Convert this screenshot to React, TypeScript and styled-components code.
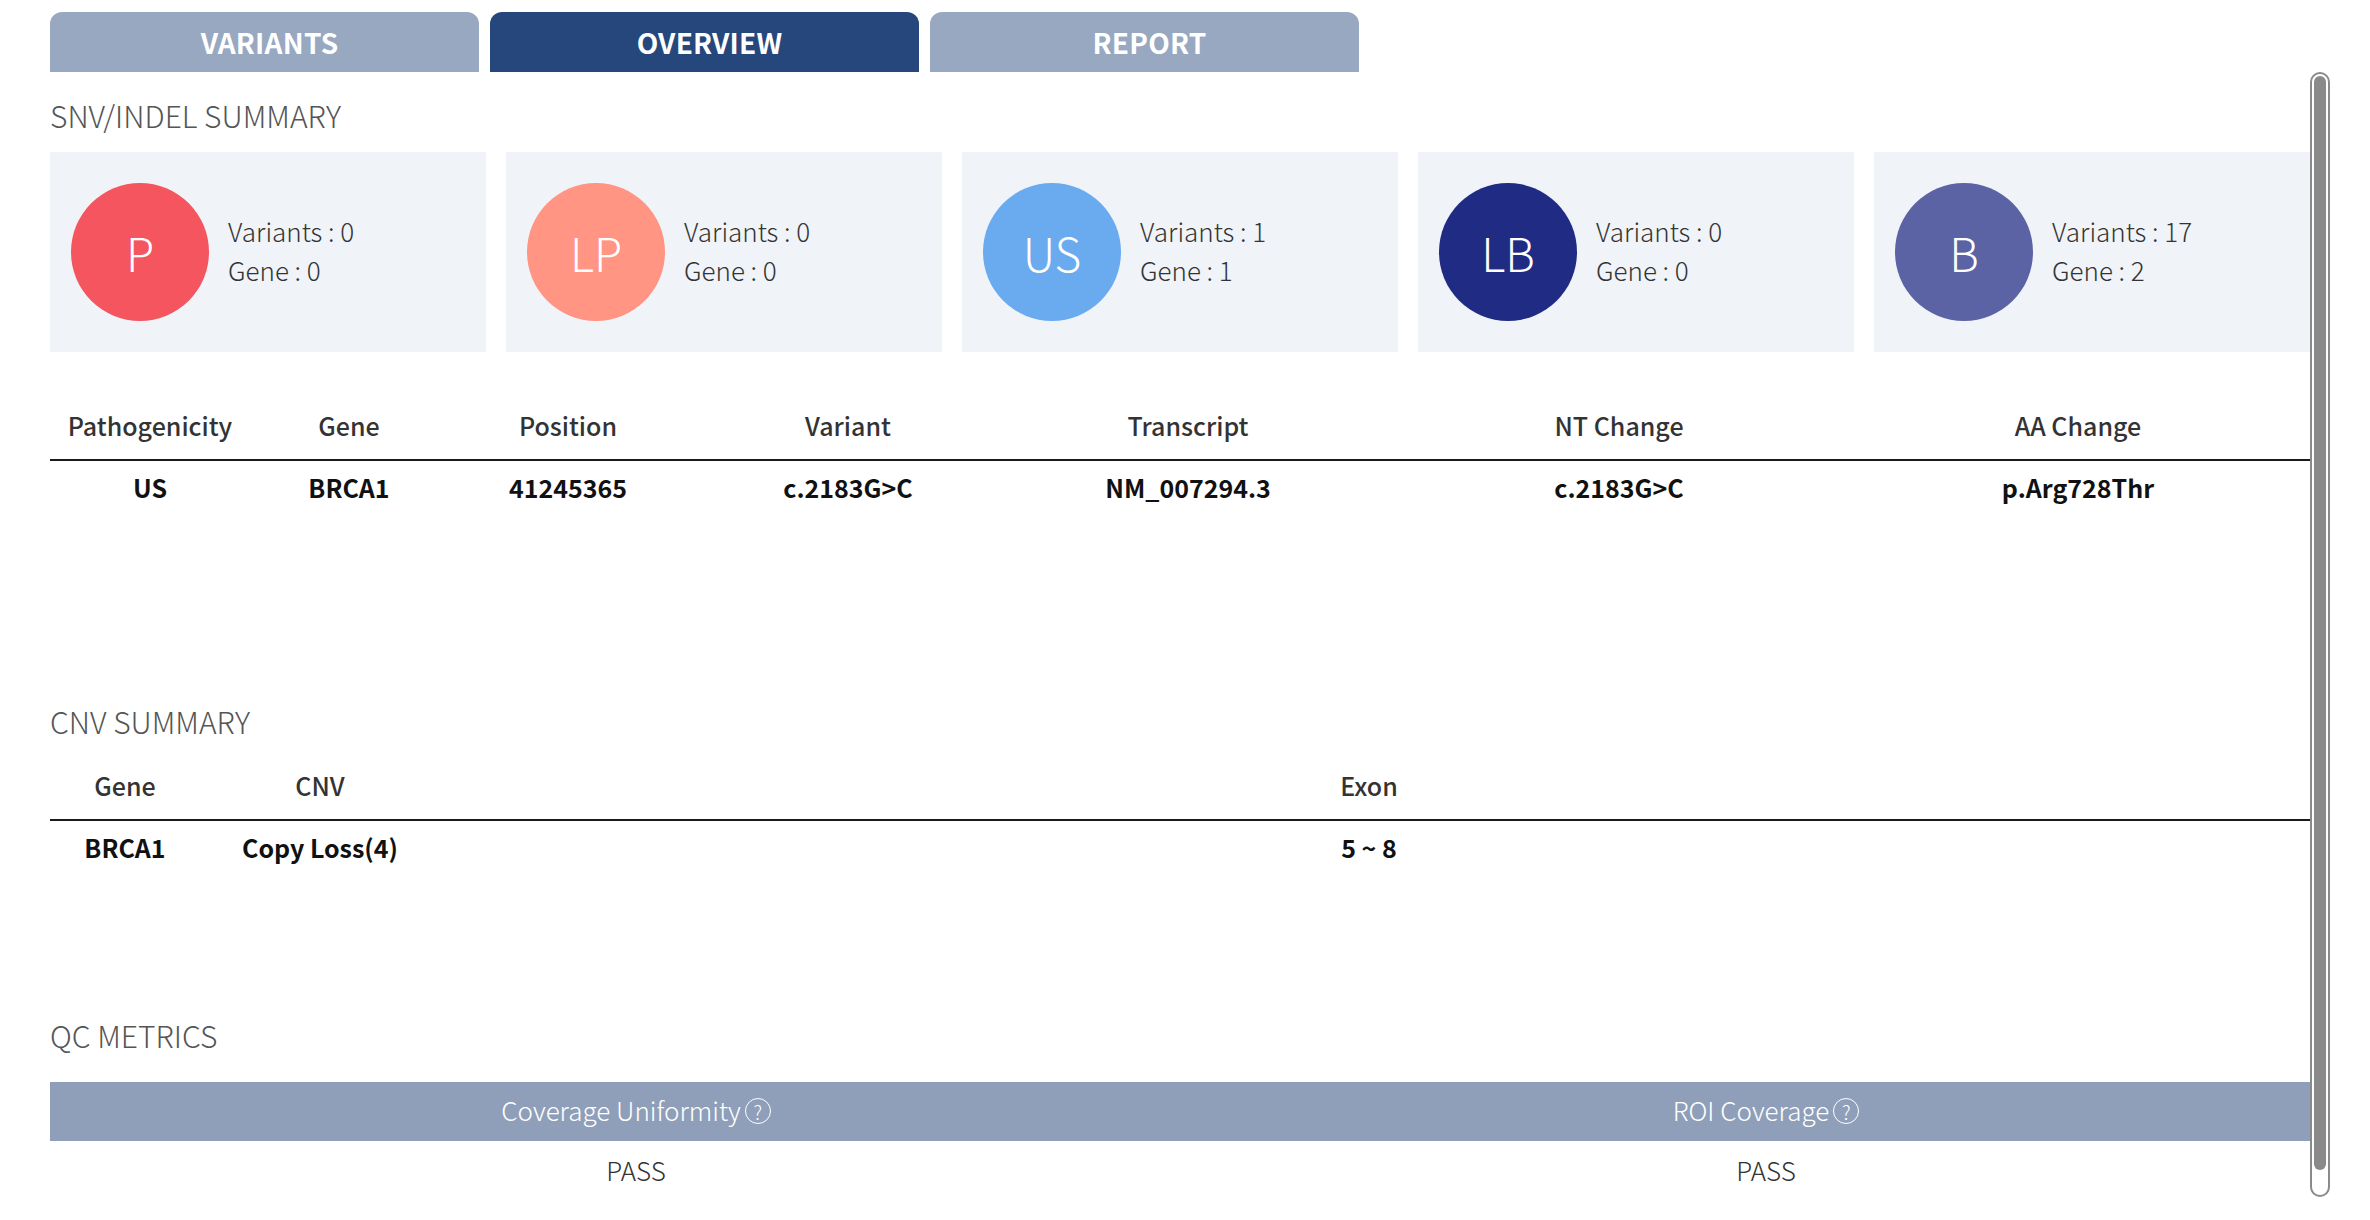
import * as React from "react";
import styled, { createGlobalStyle } from "styled-components";

const GlobalStyle = createGlobalStyle`
    html, body {
        margin: 0;
        padding: 0;
        background: #fff;
        font-family: "Noto Sans CJK KR", "Noto Sans", sans-serif;
        overflow: hidden;
    }
`;

const Page = styled.div`
    padding: 12px 40px 0 50px;
`;

const Tabs = styled.div`
    display: flex;
    gap: 11px;
`;

const Tab = styled.div<{ active?: boolean }>`
    width: 429px;
    height: 60px;
    padding-left: 10px;
    box-sizing: border-box;
    display: flex;
    align-items: center;
    justify-content: center;
    border-radius: 12px 12px 0 0;
    background: ${p => (p.active ? "#25477c" : "#97a8c0")};
    color: #fff;
    font-size: 28px;
    font-weight: 700;
    letter-spacing: 0.2px;
    cursor: pointer;
`;

const Body = styled.div`
    display: flex;
    height: 1125px;
`;

const Scroller = styled.div`
    flex: 1;
    min-width: 0;
    overflow: hidden;
    padding-top: 22px;
`;

const Track = styled.div`
    width: 20px;
    flex-shrink: 0;
    box-sizing: border-box;
    border: 2px solid #8a8a8a;
    border-radius: 10px;
    padding: 2px;
    background: #fff;
`;

const Thumb = styled.div`
    height: 1094px;
    background: #8a8a8a;
    border-radius: 7px;
`;

const Title = styled.div<{ gap: number }>`
    font-size: 30px;
    font-weight: 300;
    line-height: 42px;
    color: #555;
    margin-bottom: ${p => p.gap}px;
`;

const Cards = styled.div`
    display: grid;
    grid-template-columns: repeat(5, 1fr);
    gap: 20px;
    margin-bottom: 39px;
`;

const Card = styled.div`
    height: 200px;
    background: #f0f4f9;
    display: flex;
    align-items: center;
    gap: 19px;
    padding: 0 21px;
`;

const Circle = styled.div<{ color: string }>`
    width: 138px;
    height: 138px;
    border-radius: 50%;
    flex-shrink: 0;
    background: ${p => p.color};
    color: #fff;
    font-size: 46px;
    font-weight: 300;
    display: flex;
    align-items: center;
    justify-content: center;
`;

const Counts = styled.div`
    font-size: 26px;
    font-weight: 300;
    line-height: 39px;
    color: #333;
    margin-top: -4px;
`;

const Table = styled.div<{ minH: number }>`
    min-height: ${p => p.minH}px;
`;

const Row = styled.div<{ cols: string; head?: boolean }>`
    display: grid;
    grid-template-columns: ${p => p.cols};
    align-items: center;
    height: ${p => (p.head ? "70px" : "54px")};
    box-sizing: border-box;
    border-bottom: ${p => (p.head ? "2px solid #1a1a1a" : "none")};
    padding-bottom: ${p => (p.head ? "0" : "2px")};
    font-size: 25px;
    font-weight: ${p => (p.head ? 500 : 700)};
    color: ${p => (p.head ? "#333" : "#111")};
`;

const Cell = styled.div`
    text-align: center;
    white-space: nowrap;
`;

const QcHead = styled.div`
    display: grid;
    grid-template-columns: 1172fr 1088fr;
    height: 59px;
    box-sizing: border-box;
    padding-bottom: 4px;
    align-items: center;
    background: #8f9fb9;
    color: #fff;
    font-size: 26px;
    font-weight: 300;
`;

const QcHeadCell = styled.div`
    display: flex;
    align-items: center;
    justify-content: center;
    gap: 4px;
    white-space: nowrap;
`;

const QcRow = styled.div`
    display: grid;
    grid-template-columns: 1172fr 1088fr;
    height: 60px;
    box-sizing: border-box;
    padding-bottom: 4px;
    align-items: center;
    color: #333;
    font-size: 26px;
    font-weight: 300;
`;

const Help = styled.span`
    display: inline-flex;
    align-items: center;
    justify-content: center;
    width: 26px;
    height: 26px;
    margin-top: 3px;
    border: 1.5px solid #fff;
    border-radius: 50%;
    box-sizing: border-box;
    font-size: 19px;
    font-weight: 300;
    line-height: 1;
    cursor: help;
`;

const summary = [
    { label: "P", color: "#f5555f", variants: 0, gene: 0 },
    { label: "LP", color: "#ff9582", variants: 0, gene: 0 },
    { label: "US", color: "#6aabf0", variants: 1, gene: 1 },
    { label: "LB", color: "#202b84", variants: 0, gene: 0 },
    { label: "B", color: "#5b63a4", variants: 17, gene: 2 }
];

const snvCols = "200px 198px 240px 320px 360px 502px 416px";
const snvHead = ["Pathogenicity", "Gene", "Position", "Variant", "Transcript", "NT Change", "AA Change"];
const snvRows = [["US", "BRCA1", "41245365", "c.2183G>C", "NM_007294.3", "c.2183G>C", "p.Arg728Thr"]];

const cnvCols = "150px 240px 1858px";

export default function App() {
    const [tab, setTab] = React.useState("OVERVIEW");
    return (
        <>
            <GlobalStyle />
            <Page>
                <Tabs>
                    {["VARIANTS", "OVERVIEW", "REPORT"].map(t => (
                        <Tab key={t} active={tab === t} onClick={() => setTab(t)}>
                            {t}
                        </Tab>
                    ))}
                </Tabs>
                <Body>
                    <Scroller>
                        <Title gap={16}>SNV/INDEL SUMMARY</Title>
                        <Cards>
                            {summary.map(s => (
                                <Card key={s.label}>
                                    <Circle color={s.color}>{s.label}</Circle>
                                    <Counts>
                                        <div>Variants : {s.variants}</div>
                                        <div>Gene : {s.gene}</div>
                                    </Counts>
                                </Card>
                            ))}
                        </Cards>
                        <Table minH={309}>
                            <Row cols={snvCols} head>
                                {snvHead.map(h => (
                                    <Cell key={h}>{h}</Cell>
                                ))}
                            </Row>
                            {snvRows.map((r, i) => (
                                <Row cols={snvCols} key={i}>
                                    {r.map((c, j) => (
                                        <Cell key={j}>{c}</Cell>
                                    ))}
                                </Row>
                            ))}
                        </Table>

                        <Title gap={9}>CNV SUMMARY</Title>
                        <Table minH={263}>
                            <Row cols={cnvCols} head>
                                <Cell>Gene</Cell>
                                <Cell>CNV</Cell>
                                <Cell>Exon</Cell>
                            </Row>
                            <Row cols={cnvCols}>
                                <Cell>BRCA1</Cell>
                                <Cell>Copy Loss(4)</Cell>
                                <Cell>5 ~ 8</Cell>
                            </Row>
                        </Table>

                        <Title gap={26}>QC METRICS</Title>
                        <QcHead>
                            <QcHeadCell>
                                Coverage Uniformity<Help>?</Help>
                            </QcHeadCell>
                            <QcHeadCell>
                                ROI Coverage<Help>?</Help>
                            </QcHeadCell>
                        </QcHead>
                        <QcRow>
                            <Cell>PASS</Cell>
                            <Cell>PASS</Cell>
                        </QcRow>
                    </Scroller>
                    <Track>
                        <Thumb />
                    </Track>
                </Body>
            </Page>
        </>
    );
}
